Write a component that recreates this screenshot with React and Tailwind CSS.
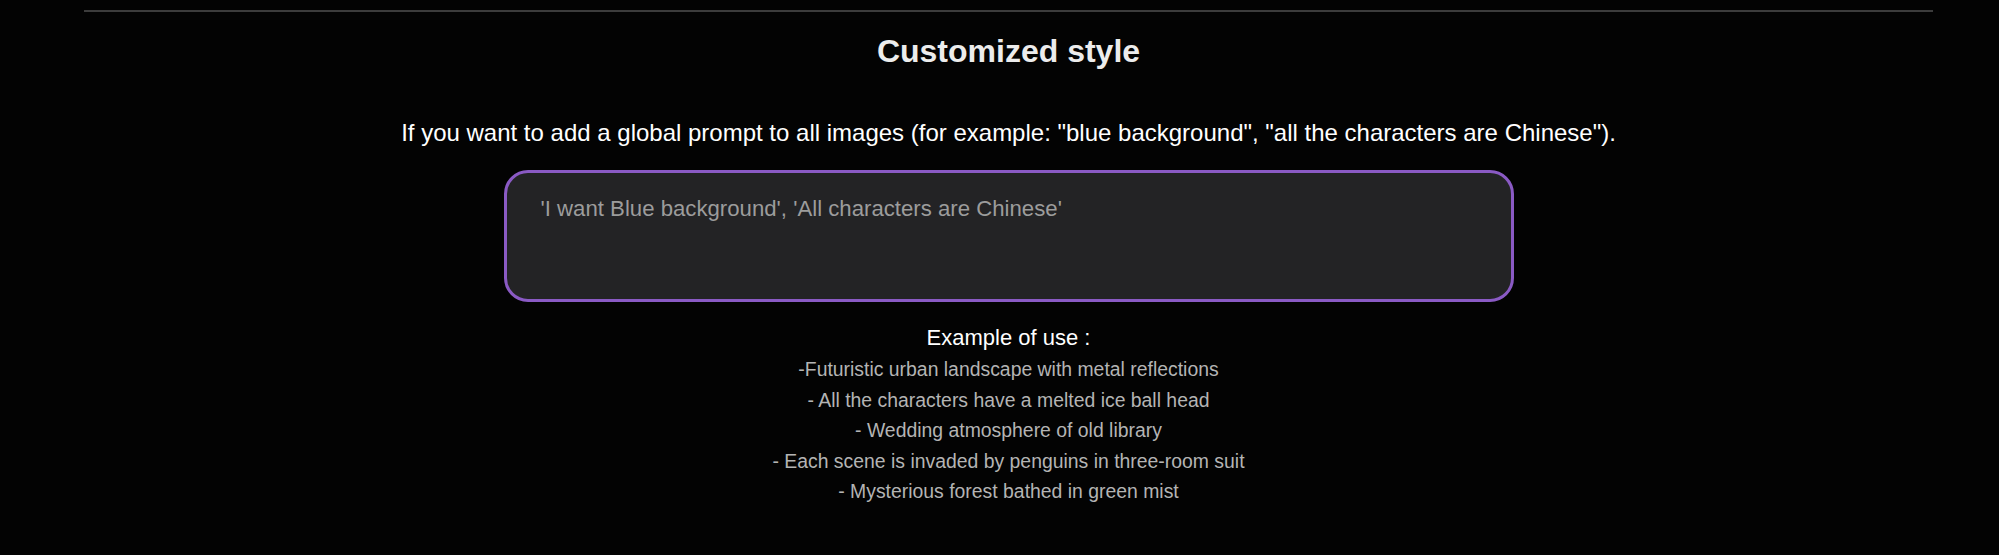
export default function App() {
    const examples = [
        "-Futuristic urban landscape with metal reflections",
        "- All the characters have a melted ice ball head",
        "- Wedding atmosphere of old library",
        "- Each scene is invaded by penguins in three-room suit",
        "- Mysterious forest bathed in green mist",
    ];

    return (
        <div className="w-full h-[555px] bg-[#030303] font-['Liberation_Sans',Arial,sans-serif] overflow-hidden">
            <div className="pl-[84px] pr-[66px] pt-[10px]">
                <div className="border-t-2 border-[#3c3c3c]" />
                <div className="flex flex-col items-center">
                    <h2 className="mt-[21px] text-[32px] leading-[37px] font-bold text-[#ececec]">
                        Customized style
                    </h2>
                    <p className="mt-[49px] text-[24px] leading-[28px] text-white">
                        If you want to add a global prompt to all images (for example: "blue background", "all the characters are Chinese").
                    </p>
                    <textarea
                        className="mt-[23px] w-[1010px] h-[132px] resize-none rounded-[24px] border-[3px] border-[#8a5ac4] bg-[#232325] px-[34px] pt-[23px] text-[22.2px] leading-[26px] text-[#d0d0d0] placeholder:text-[#9c9c9c] outline-none"
                        placeholder="'I want Blue background', 'All characters are Chinese'"
                    />
                    <div className="mt-[21px] text-[22px] leading-[30px] text-white">Example of use :</div>
                    <ul className="mt-[1px] flex flex-col items-center text-[19.4px] leading-[30.6px] text-[#b4b4b4]">
                        {examples.map((e) => (
                            <li key={e}>{e}</li>
                        ))}
                    </ul>
                </div>
            </div>
        </div>
    );
}
